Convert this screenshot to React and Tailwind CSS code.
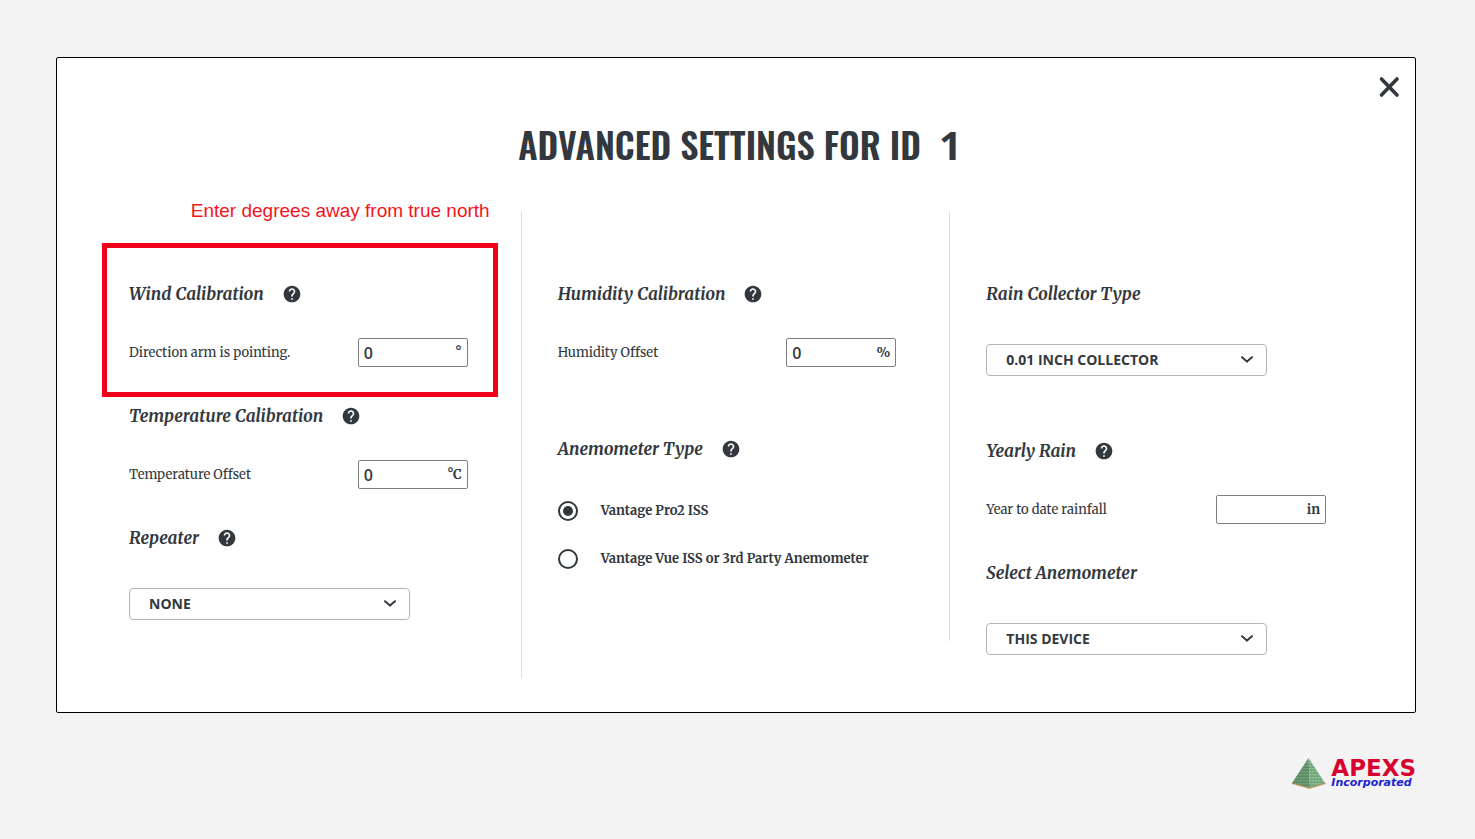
import { useState } from "react";
import { MdHelp } from "react-icons/md";

const serif = "font-['Merriweather','DejaVu_Serif_Condensed','DejaVu_Serif',serif]";

function Heading({ children, help }) {
  return (
    <div className="flex h-6 items-center gap-[18px]">
      <h2 className={`${serif} text-[17px] leading-6 font-bold italic whitespace-nowrap`}>{children}</h2>
      {help && (
        <button type="button" aria-label={`Help: ${children}`} className="shrink-0">
          <MdHelp className="size-5" />
        </button>
      )}
    </div>
  );
}

function Field({ id, label, unit, initial }) {
  const [value, setValue] = useState(initial);
  return (
    <div className="mt-8 flex items-center justify-between">
      <label htmlFor={id} className={`${serif} text-[13px] leading-5 whitespace-nowrap`}>
        {label}
      </label>
      <div className="flex h-[29px] w-[110px] items-center rounded-xs border border-[#7d7f82] bg-white px-[5px]">
        <input
          id={id}
          type="text"
          value={value}
          onChange={(e) => setValue(e.target.value)}
          className="w-0 min-w-0 flex-1 bg-transparent font-['Open_Sans',sans-serif] text-[16px] font-semibold outline-none"
        />
        <span className={`${serif} text-[13px] leading-5 font-bold`}>{unit}</span>
      </div>
    </div>
  );
}

function Dropdown({ label, options }) {
  return (
    <div className="relative mt-[38px] w-[281px] max-w-full">
      <select
        aria-label={label}
        className="h-8 w-full appearance-none rounded-sm border border-[#b3b5b7] bg-white pr-10 pb-0.5 pl-[19px] font-['Open_Sans',sans-serif] text-[14px] font-bold"
      >
        {options.map((o) => (
          <option key={o}>{o}</option>
        ))}
      </select>
      <svg
        viewBox="0 0 14 8"
        className="pointer-events-none absolute top-3 right-[13px] h-2 w-[14px]"
        fill="none"
        stroke="currentColor"
        strokeWidth="2"
        strokeLinecap="round"
      >
        <path d="M2 1.2 Q5 3.6 7 5.6 Q9 3.6 12 1.2" />
      </svg>
    </div>
  );
}

function Radio({ id, label, checked, onChange }) {
  return (
    <div className="flex h-6 items-center gap-[23px]">
      <input
        id={id}
        type="radio"
        name="anemometer-type"
        checked={checked}
        onChange={onChange}
        className="size-5 shrink-0 appearance-none rounded-full border-2 border-[#32383e] bg-white checked:bg-[#32383e] checked:bg-clip-content checked:p-[3px]"
      />
      <label htmlFor={id} className={`${serif} text-[13px] leading-5 font-bold whitespace-nowrap`}>
        {label}
      </label>
    </div>
  );
}

function Logo() {
  return (
    <a href="#" className="flex items-center gap-1" aria-label="APEXS Incorporated">
      <svg viewBox="0 0 36 32" className="h-8 w-9">
        <defs>
          <pattern id="brick" width="3" height="3" patternUnits="userSpaceOnUse">
            <rect width="3" height="3" fill="#93c49c" />
            <path d="M0 0H3M0 1.5H3M1 0V1.5M2.5 1.5V3" stroke="#568a64" strokeWidth="0.5" />
          </pattern>
          <pattern id="brick-dark" width="3" height="3" patternUnits="userSpaceOnUse">
            <rect width="3" height="3" fill="#76a67c" />
            <path d="M0 0H3M0 1.5H3M1 0V1.5M2.5 1.5V3" stroke="#467450" strokeWidth="0.5" />
          </pattern>
        </defs>
        <path d="M0 27 L18 32 L36 27 L31 24 L5 24Z" fill="#d9c79b" />
        <path d="M17.500 1 L1 26 L19 31Z" fill="url(#brick-dark)" />
        <path d="M17.500 1 L34 26 L19 31Z" fill="url(#brick)" />
        <path d="M1 26 L19 31 L34 26" fill="none" stroke="#a87f45" strokeWidth="0.8" />
      </svg>
      <span className="flex flex-col pt-1 font-['DejaVu_Sans',sans-serif] font-bold">
        <span className="text-[23px] leading-4 text-[#d8042f]">APEXS</span>
        <span className="text-[11px] leading-[14px] text-[#1c22d2] italic">Incorporated</span>
      </span>
    </a>
  );
}

export default function App() {
  const [type, setType] = useState("pro2");
  return (
    <div className="min-h-screen bg-[#f3f3f3] pt-[57px] pr-[59px] pb-12 pl-14 text-[#32383e]">
      <main className="rounded-xs border border-black bg-white pb-[34px]">
        <div className="flex justify-end pt-[17px] pr-[14px]">
          <button type="button" aria-label="Close">
            <svg viewBox="0 0 24 24" className="size-6" fill="none" stroke="currentColor" strokeWidth="3.6" strokeLinecap="round">
              <path d="M4.500 4 L20 20 M20 4 L4.500 20" />
            </svg>
          </button>
        </div>
        <h1 className="mt-[21px] flex items-baseline justify-center gap-[18px] pl-2 font-['Oswald','Liberation_Sans_Narrow',sans-serif] text-[36px] leading-[48px] font-semibold">
          ADVANCED SETTINGS FOR ID
          <span className="font-['Open_Sans',sans-serif] text-[40px] font-bold">1</span>
        </h1>

        <div className="mt-[43px] grid grid-cols-3 items-start px-9">
          <div className="flex flex-col gap-[37px] border-r border-[#dedede] pt-[70px] pr-[53px] pb-[58px] pl-9">
            <section className="relative">
              <Heading help>Wind Calibration</Heading>
              <Field id="wind" label="Direction arm is pointing." unit="°" initial="0" />
              <p className="absolute -top-[83px] -right-[22px] font-['Liberation_Sans',sans-serif] text-[19px] leading-6 whitespace-nowrap text-[#f5151b]">
                Enter degrees away from true north
              </p>
              <div className="pointer-events-none absolute -top-[39px] -right-[30px] -bottom-[30px] -left-[27px] border-[5px] border-[#f00019]" />
            </section>
            <section>
              <Heading help>Temperature Calibration</Heading>
              <Field id="temp" label="Temperature Offset" unit="°C" initial="0" />
            </section>
            <section>
              <Heading help>Repeater</Heading>
              <Dropdown label="Repeater" options={["NONE", "A", "B", "C"]} />
            </section>
          </div>

          <div className="flex flex-col gap-[70px] border-r border-[#dedede] pt-[70px] pr-[53px] pb-[70px] pl-9">
            <section>
              <Heading help>Humidity Calibration</Heading>
              <Field id="humidity" label="Humidity Offset" unit="%" initial="0" />
            </section>
            <section>
              <Heading help>Anemometer Type</Heading>
              <div className="mt-[38px] flex flex-col gap-6">
                <Radio id="pro2" label="Vantage Pro2 ISS" checked={type === "pro2"} onChange={() => setType("pro2")} />
                <Radio id="vue" label="Vantage Vue ISS or 3rd Party Anemometer" checked={type === "vue"} onChange={() => setType("vue")} />
              </div>
            </section>
          </div>

          <div className="flex flex-col pt-[70px] pr-[53px] pl-9">
            <section>
              <Heading>Rain Collector Type</Heading>
              <Dropdown label="Rain Collector Type" options={["0.01 INCH COLLECTOR", "0.2 MM COLLECTOR"]} />
            </section>
            <section className="mt-[63px]">
              <Heading help>Yearly Rain</Heading>
              <Field id="rain" label="Year to date rainfall" unit="in" initial="" />
            </section>
            <section className="mt-[37px]">
              <Heading>Select Anemometer</Heading>
              <Dropdown label="Select Anemometer" options={["THIS DEVICE"]} />
            </section>
          </div>
        </div>
      </main>
      <footer className="mt-[43px] flex justify-end">
        <Logo />
      </footer>
    </div>
  );
}
